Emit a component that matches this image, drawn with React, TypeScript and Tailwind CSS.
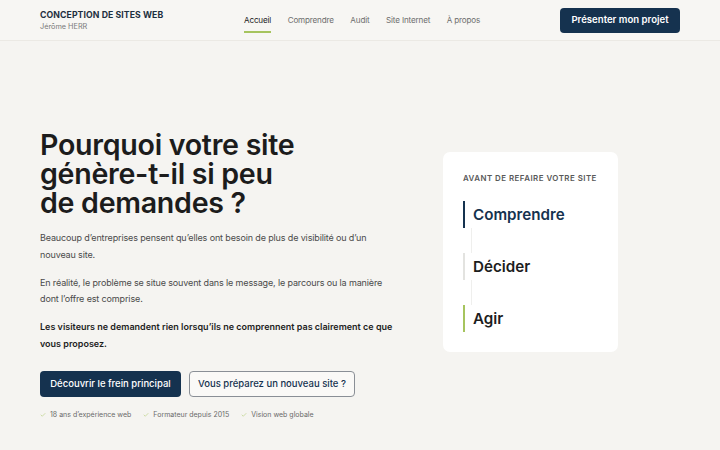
import { Check } from 'lucide-react';

const NAV_LINKS = ['Accueil', 'Comprendre', 'Audit', 'Site Internet', 'À propos'];

const STEPS = [
  { label: 'Comprendre', bar: 'border-[#15324f]', text: 'text-[#15324f]' },
  { label: 'Décider', bar: 'border-[#e3e3e0]', text: 'text-[#1d1d1d]' },
  { label: 'Agir', bar: 'border-[#a6c45e]', text: 'text-[#1d1d1d]' },
];

const PROOFS = ['18 ans d’expérience web', 'Formateur depuis 2015', 'Vision web globale'];

function Header() {
  return (
    <header className="h-[41px] border-b border-[#ebe9e4] bg-[#f7f6f3] px-10 flex items-center">
      <div className="w-[204px] pt-[1px]">
        <div className="text-[8.7px] font-bold text-[#1d2f40] leading-[11px] tracking-[0.01em]">
          CONCEPTION DE SITES WEB
        </div>
        <div className="text-[7.3px] text-[#7a7a7a] leading-[11px]">Jérôme HERR</div>
      </div>
      <nav className="flex items-center gap-[16.5px] tracking-[-0.01em]">
        {NAV_LINKS.map((link, i) => (
          <a
            key={link}
            className={
              i === 0
                ? 'text-[8.1px] text-[#222] leading-[12px] pb-[5px] border-b-2 border-[#a6c45e] mt-[7px]'
                : 'text-[8.1px] text-[#6e6e6e] leading-[12px]'
            }
          >
            {link}
          </a>
        ))}
      </nav>
      <button className="ml-auto h-[25px] w-[120px] rounded-[4px] bg-[#15324f] text-white text-[9.6px] font-semibold">
        Présenter mon projet
      </button>
    </header>
  );
}

function StepsCard() {
  return (
    <aside className="self-start mt-[22px] w-[175px] rounded-[7px] bg-white px-[20px] pt-[20px] pb-[20px]">
      <div className="text-[7.9px] font-semibold tracking-[0.06em] text-[#585858] leading-[12px] whitespace-nowrap">
        AVANT DE REFAIRE VOTRE SITE
      </div>
      <div className="mt-[17px]">
        {STEPS.map((step, i) => (
          <div key={step.label}>
            {i > 0 && <div className="ml-[8px] h-[25px] w-px bg-[#efefed]" />}
            <div className={`h-[27px] border-l-2 pl-[8px] flex items-center ${step.bar}`}>
              <span className={`text-[15.2px] font-semibold leading-none ${step.text}`}>{step.label}</span>
            </div>
          </div>
        ))}
      </div>
    </aside>
  );
}

export default function App() {
  return (
    <div className="min-h-[450px] bg-[#f5f4f1]" style={{ fontFamily: 'Inter, "Noto Sans", sans-serif' }}>
      <Header />
      <main className="px-10 pt-[89px] flex">
        <section className="w-[403px]">
          <h1 className="text-[28.6px] leading-[29px] font-semibold text-[#1c1c1c] tracking-[-0.01em]">
            Pourquoi votre site
            <br />
            génère-t-il si peu
            <br />
            de demandes ?
          </h1>
          <div className="mt-[13px] w-[358px] text-[9px] leading-[16.5px] tracking-[-0.015em] text-[#4a4a4a]">
            <p className="mb-[11.5px]">
              Beaucoup d’entreprises pensent qu’elles ont besoin de plus de visibilité ou d’un nouveau site.
            </p>
            <p className="mb-[11.5px]">
              En réalité, le problème se situe souvent dans le message, le parcours ou la manière dont l’offre est
              comprise.
            </p>
            <p className="font-semibold tracking-normal text-[#1e1e1e]">
              Les visiteurs ne demandent rien lorsqu’ils ne comprennent pas clairement ce que vous proposez.
            </p>
          </div>
          <div className="mt-[19px] flex gap-2">
            <button className="h-[26px] w-[141px] rounded-[4px] bg-[#15324f] text-white text-[9.5px] font-medium">
              Découvrir le frein principal
            </button>
            <button className="h-[26px] w-[166px] rounded-[4px] border border-[#8a8f96] bg-[#faf9f7] text-[#15324f] text-[9.5px] font-medium">
              Vous préparez un nouveau site ?
            </button>
          </div>
          <ul className="mt-[12px] flex gap-[12px] text-[7px] leading-[12px] text-[#6a6a6a]">
            {PROOFS.map((p) => (
              <li key={p} className="flex items-center gap-[4px]">
                <Check size={6} strokeWidth={2} className="text-[#a6c45e]" />
                {p}
              </li>
            ))}
          </ul>
        </section>
        <StepsCard />
      </main>
    </div>
  );
}
